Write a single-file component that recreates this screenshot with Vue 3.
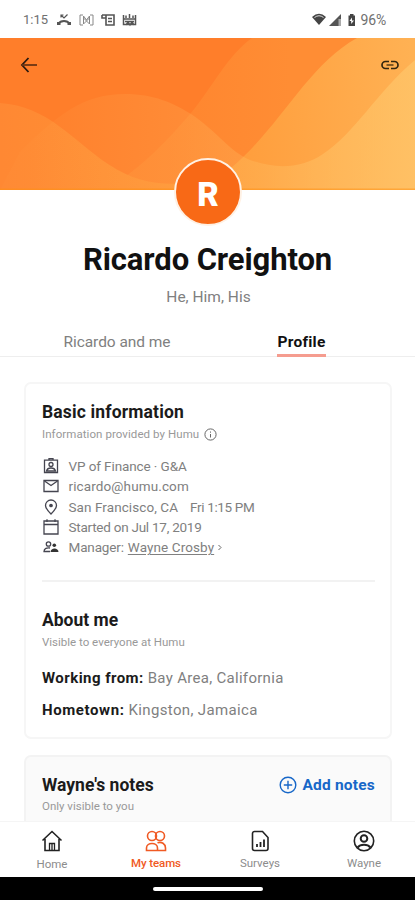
<script setup>
const details = [
  { icon: 'badge', text: 'VP of Finance · G&A', cls: 'd1' },
  { icon: 'mail', text: 'ricardo@humu.com', cls: 'd2' },
  { icon: 'pin', text: 'San Francisco, CA', time: 'Fri 1:15 PM', cls: 'd3' },
  { icon: 'calendar', text: 'Started on Jul 17, 2019', cls: 'd4' },
  { icon: 'people', text: 'Manager:', link: 'Wayne Crosby', cls: 'd5' },
]
const tabs = [
  { id: 'home', label: 'Home' },
  { id: 'teams', label: 'My teams', active: true },
  { id: 'surveys', label: 'Surveys' },
  { id: 'wayne', label: 'Wayne' },
]
</script>

<template>
  <div class="screen">
    <header class="status">
      <span class="clock">1:15</span>
      <svg class="notices" width="84" height="14" viewBox="0 0 84 14" fill="none" stroke="#555" stroke-width="1.400">
        <path d="M2 11c3-4 9-4 12 0" stroke-width="1.800" /><path d="M1 10.500h3.500M11.500 10.500H15" stroke-width="3" /><path d="M5 2l3 3 3.500-3.500M5 4.500V2h2.500" stroke-width="1.200" />
        <path d="M27 2h-3v10h3M34 2h3v10h-3M27.500 11V3l3 4 3-4v8M27.500 11l6-6M33.500 11l-6-6" stroke-width="1" stroke="#888" />
        <path d="M46 2h12v10h-8V2M46 2v3h4M52 5.500h4M52 8.500h4" stroke-width="1.600" />
        <path d="M67.500 2v9.500h12V2M70 5V2.500M73.500 5V1M77 5V2.500M67.500 6h12M69 8.500h9M70 12l2-3 2 3 2-3 2 3" stroke-width="1.500" />
      </svg>
      <svg class="signals" width="45" height="14" viewBox="0 0 45 14">
        <path d="M0 4q7-6.500 14 0L7 12z" fill="#444" /><path d="M2.500 4.500q4.500-3.500 9 0" fill="none" stroke="#ddd" />
        <path d="M17 13L29 1v12z" fill="#555" /><path d="M26.500 6h2.500v7h-2.500z" fill="#aaa" />
        <path d="M38 1h3.500v1.500H43V13h-6.500V2.500H38z" fill="#444" /><path d="M40 4.500l-2.500 3.500h1.700v3L42 7.500h-2z" fill="#fff" />
      </svg>
      <span class="charge">96%</span>
    </header>

    <section class="banner">
      <svg class="waves" width="415" height="152" viewBox="0 0 415 152">
        <defs>
          <linearGradient id="diag" gradientUnits="userSpaceOnUse" x1="170" y1="90" x2="290" y2="90"><stop offset="0" stop-color="#ff9c3e" stop-opacity=".25" /><stop offset="1" stop-color="#ff9c3e" stop-opacity=".5" /></linearGradient>
          <linearGradient id="deep" gradientUnits="userSpaceOnUse" x1="0" y1="100" x2="415" y2="70"><stop offset="0" stop-color="#ff8833" /><stop offset=".4" stop-color="#ff9234" /><stop offset=".6" stop-color="#ff9f3e" /><stop offset="1" stop-color="#ffb153" /></linearGradient>
          <linearGradient id="crest" gradientUnits="userSpaceOnUse" x1="30" y1="0" x2="415" y2="0"><stop offset="0" stop-color="#ffcb70" stop-opacity=".03" /><stop offset=".25" stop-color="#ffcb70" stop-opacity=".12" /><stop offset=".6" stop-color="#ffcb70" stop-opacity=".25" /><stop offset="1" stop-color="#ffcb70" stop-opacity=".6" /></linearGradient>
        </defs>
        <path d="M0 0h415v152H0z" fill="#ff7e2a" />
        <path d="M105 152C145 128 168 101 191 75 213 48 228 17 252 0h163v152z" fill="url(#diag)" />
        <path d="M0 65C48 68 72 102 108 126c32 21 57 22 92 18 20-2 37-18 53-35C289 71 315 23 357 0h58v152H0z" fill="url(#deep)" />
        <path d="M20 114C58 76 84 56 125 56c29 0 48 9 66 20 28 19 38 37 59 46 25 9 51 9 73-6 33-22 53-61 92-94v130H0z" fill="url(#crest)" />
        <path d="M0 151.300h415" stroke="#ff9010" stroke-width="1.400" opacity=".5" />
      </svg>
      <div class="banner-bar">
        <svg width="18" height="18" viewBox="0 0 18 18" fill="none" stroke="#2c1a10" stroke-width="1.800"><path d="M8.500 2L2 9l6.500 7" /><path d="M2 9h15" stroke="#6b3513" /></svg>
        <svg width="18" height="12" viewBox="0 0 18 12" fill="none" stroke="#33260f" stroke-width="1.700"><path d="M8 2.500H4.500a3.500 3.500 0 0 0 0 7H8M10 2.500h3.500a3.500 3.500 0 0 1 0 7H10" /><path d="M5.500 6h7" stroke="#6b4a1c" /></svg>
      </div>
      <div class="avatar">R</div>
    </section>

    <section class="person">
      <h1><span>Ricardo Creighton</span></h1>
      <p><span>He, Him, His</span></p>
    </section>
    <nav class="tabs">
      <div><span class="t1">Ricardo and me</span></div>
      <div><span class="t2">Profile</span></div>
    </nav>

    <main>
      <article class="card">
        <h2><span class="h-basic">Basic information</span></h2>
        <div class="hint first"><span class="hint1">Information provided by Humu</span>
          <svg width="13" height="13" viewBox="0 0 13 13" fill="none" stroke="#666"><circle cx="6.500" cy="6.500" r="5.600" /><path d="M6.500 6v3.500M6.500 3.500v1.200" /></svg>
        </div>
        <ul>
          <li v-for="d in details" :key="d.icon">
            <svg width="16" height="16" viewBox="0 0 16 16" fill="none" stroke="#454550" stroke-width="1.300">
              <template v-if="d.icon === 'badge'"><path d="M1.500 2.200h13v12.300h-13zM6 2V.7h4V2" /><circle cx="8" cy="6.500" r="2" /><path d="M3.500 13c1-4 8-4 9 0z" /></template>
              <template v-else-if="d.icon === 'mail'"><path d="M1 2.500h14v11H1z" /><path d="M1.500 3L8 7.500 14.500 3" /></template>
              <template v-else-if="d.icon === 'pin'"><path d="M8 15C4 11 2.500 9 2.500 6.500a5.500 5.500 0 0 1 11 0C13.500 9 12 11 8 15z" /><circle cx="8" cy="6.500" r="1.200" fill="#454550" /></template>
              <template v-else-if="d.icon === 'calendar'"><path d="M1 2h14v13H1zM1 5.500h14M4 .300V3M12 .300V3" /></template>
              <template v-else><circle cx="5.500" cy="5" r="2.200" /><path d="M7 12.500H1c0-3 3-4 6-3.500" /><circle cx="11.300" cy="6.300" r="1.800" fill="#333" stroke="none" /><path d="M7.500 13c0-4.800 8-4.800 8 0z" fill="#333" stroke="none" /></template>
            </svg>
            <span :class="d.cls">{{ d.text }}</span>
            <span v-if="d.time" class="time">{{ d.time }}</span>
            <template v-if="d.link"><a>{{ d.link }}</a><svg class="chev" width="4" height="7" viewBox="0 0 4 7" fill="none" stroke="#666"><path d="M.500 1L3 3.500.500 6" /></svg></template>
          </li>
        </ul>
        <hr />
        <h2><span class="h-about">About me</span></h2>
        <div class="hint"><span class="hint2">Visible to everyone at Humu</span></div>
        <div class="fact f1"><b class="k1">Working from:</b><span class="v1">Bay Area, California</span></div>
        <div class="fact"><b class="k2">Hometown:</b><span class="v2">Kingston, Jamaica</span></div>
      </article>
      <article class="card notes">
        <div class="notes-head">
          <h2><span class="h-notes">Wayne's notes</span></h2>
          <button>
            <svg width="18" height="18" viewBox="0 0 18 18" fill="none" stroke="#1767c8" stroke-width="1.400"><circle cx="9" cy="9" r="7.800" /><path d="M9 4.800v8.400M4.800 9h8.400" /></svg>
            <span>Add notes</span>
          </button>
        </div>
        <div class="hint"><span class="hint3">Only visible to you</span></div>
      </article>
    </main>

    <nav class="bottom">
      <div v-for="t in tabs" :key="t.id" class="item" :class="[t.id, { active: t.active }]">
        <svg width="22" height="22" viewBox="0 0 22 22" fill="none" stroke="currentColor" stroke-width="1.600">
          <template v-if="t.id === 'home'"><path d="M1.500 10.500L11 1.500l9.500 9M4 9v11.500h14V9" /><path d="M8.500 20v-6.500h5V20M11 14v6" stroke-width="1.300" /></template>
          <template v-else-if="t.id === 'teams'"><circle cx="7" cy="6" r="4.500" /><circle cx="15" cy="6" r="4.500" /><path d="M1.500 20.500v-2.500c0-6 11-6 11 0v2.500zM12.500 12.800c4-1.400 8 1 8 5.200v2.500h-8" /></template>
          <template v-else-if="t.id === 'surveys'"><path d="M5.500 1.500h8l5.500 6v11a2 2 0 0 1-2 2H5.500a2 2 0 0 1-2-2v-15a2 2 0 0 1 2-2z" /><path d="M8 17v-3M11.500 17v-5M15 17V9.500" stroke-width="1.800" /></template>
          <template v-else><circle cx="11" cy="11" r="9.700" /><circle cx="11" cy="8.500" r="3.300" stroke-width="2" /><path d="M4.500 17.500c3-3.600 10-3.600 13 0" stroke-width="2" /></template>
        </svg>
        <span>{{ t.label }}</span>
      </div>
    </nav>
    <footer><i></i></footer>
  </div>
</template>

<style>
body { background: #fff; }
</style>

<style scoped>
* { box-sizing: border-box; margin: 0; padding: 0; }
.screen { width: 415px; height: 900px; display: flex; flex-direction: column; overflow: hidden; background: #fff; color: #808080; font-family: Roboto, "Liberation Sans", sans-serif; white-space: nowrap; }
svg { display: block; flex: none; }
.status { height: 38px; display: flex; align-items: center; padding: 1px 29px 0 23px; font-size: 13px; color: #707070; }
.clock { width: 33px; }
.signals { margin-left: auto; margin-right: 4px; }
.charge { font-size: 14px; letter-spacing: -.2px; }
.banner { height: 152px; flex: none; position: relative; }
.waves { position: absolute; inset: 0; }
.banner-bar { position: relative; display: flex; justify-content: space-between; align-items: center; padding: 18px 16px 0 20px; }
.avatar { position: absolute; left: 174px; top: 120px; width: 68px; height: 68px; border-radius: 50%; border: 2px solid #fff1e4; background: #f86916; color: #fff; font: 900 33px/69px Roboto, sans-serif; text-align: center; }
.person { height: 130px; flex: none; text-align: center; padding-top: 50px; }
h1 { font-size: 31px; line-height: 40px; font-weight: 700; color: #111; letter-spacing: -.1px; }
.person p { font-size: 15.5px; line-height: 20px; margin-top: 7px; padding-left: 2px; }
.tabs { height: 37px; flex: none; display: flex; border-bottom: 1px solid #eee; font-size: 15.5px; line-height: 20px; padding-top: 12px; }
.tabs div { flex: 1; text-align: center; padding-left: 25px; }
.tabs div + div { padding: 0 24px 0 8px; }
.tabs span { display: inline-block; height: 25px; }
.t1 { margin-left: 5px; letter-spacing: -.05px; }
.t2 { color: #111; font-weight: 700; letter-spacing: .25px; border-bottom: 3px solid #f59c8f; }
main { flex: 1; min-height: 0; overflow: hidden; padding: 25px 23px 0 24px; display: flex; flex-direction: column; gap: 16px; }
.card { height: 357px; flex: none; border: 2px solid #f6f6f6; border-radius: 7px; padding: 16px 15px 0 16px; }
h2 { font-size: 17.5px; line-height: 24px; color: #1b1b1b; font-weight: 700; }
.h-basic { letter-spacing: .15px; }
.hint { display: flex; align-items: center; height: 18px; font-size: 11.5px; color: #999; margin-top: 1px; }
.hint.first { gap: 5px; }
.hint1 { letter-spacing: .07px; }
ul { list-style: none; margin-top: 13px; }
li { display: flex; align-items: center; height: 20.3px; font-size: 13.5px; padding-left: 1px; }
li > svg:first-child { margin-right: 10px; }
li > span:first-of-type { margin-left: -.5px; }
.d1 { letter-spacing: -.1px; }
.d2 { letter-spacing: .12px; }
.d3 { letter-spacing: .08px; }
.d4 { letter-spacing: -.25px; }
.d5 { letter-spacing: -.15px; }
.time { margin-left: 12px; letter-spacing: -.35px; }
a { text-decoration: underline; text-underline-offset: 2px; margin-left: 4px; letter-spacing: .1px; }
.chev { margin-left: 4px; }
hr { border: 0; border-top: 2px solid #f2f2f2; margin: 23px 0 26px; }
.fact { display: flex; gap: 4px; font-size: 15px; line-height: 20px; margin-top: 12px; }
.f1 { margin-top: 17px; }
.fact b { color: #1b1b1b; }
.k1 { letter-spacing: .45px; }
.k2 { letter-spacing: .6px; }
.v1 { letter-spacing: .3px; }
.v2 { letter-spacing: .35px; }
.notes { background: #fafafa; border-color: #f3f3f3; }
.notes-head { display: flex; justify-content: space-between; }
.notes .hint { margin-top: 0; }
button { display: flex; align-items: center; gap: 5px; border: 0; background: none; color: #1767c8; font: 700 15.5px/20px Roboto, sans-serif; letter-spacing: .2px; }
.bottom { height: 56px; flex: none; display: grid; grid-template-columns: repeat(4, 104px); border-top: 1px solid #f5f5f5; }
.item { display: flex; flex-direction: column; align-items: center; padding-top: 8px; color: #222; font-size: 11.5px; line-height: 14px; gap: 4px; }
.item span { color: #8c8c8c; }
.item.home span { margin-top: 1px; }
.item.active, .item.active span { color: #f05a24; }
.item.active span { font-weight: 500; letter-spacing: -.1px; }
footer { height: 23px; flex: none; background: #000; display: flex; justify-content: center; padding-top: 10px; }
footer i { width: 110px; height: 4px; border-radius: 2px; background: #fff; }
</style>
